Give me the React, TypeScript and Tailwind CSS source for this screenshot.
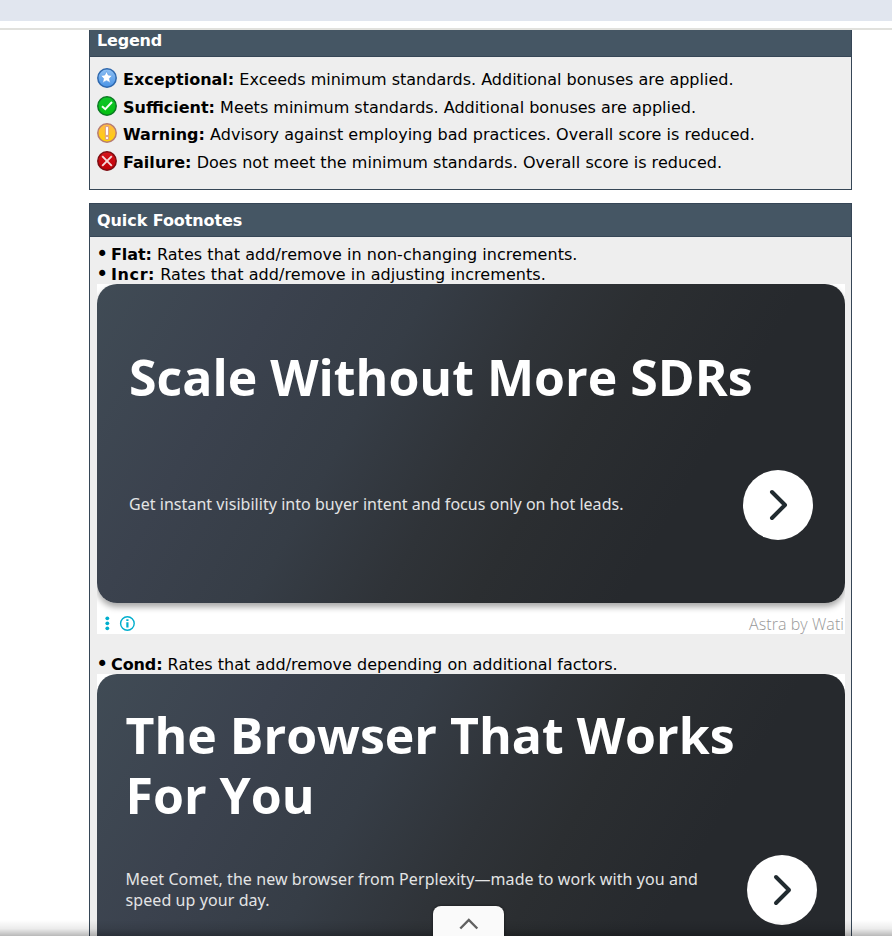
import React from "react";

const verdana = "font-['Verdana','DejaVu_Sans',sans-serif]";
const cardGradient = "bg-[linear-gradient(120deg,#404b55_0%,#3b424e_20%,#363d46_36%,#2f3338_50%,#2b2e31_60%,#26292d_76%,#26292d_100%)]";

function StatusIcon({ kind }: { kind: "star" | "check" | "warn" | "fail" }) {
  const colors = {
    star: ["#8fc0f3", "#4a94e6", "#2f68ad"],
    check: ["#0fc52a", "#04c010", "#0b7a22"],
    warn: ["#ffb84a", "#ffd400", "#b67c72"],
    fail: ["#d6141c", "#bd0006", "#7b0d12"],
  }[kind];
  return (
    <svg width="20" height="20" viewBox="0 0 20 20" className="mr-1.5 shrink-0">
      <defs>
        <linearGradient id={kind} x1="0" y1="0" x2="0" y2="1">
          <stop offset="0" stopColor={colors[0]} />
          <stop offset="1" stopColor={colors[1]} />
        </linearGradient>
      </defs>
      <circle cx="10" cy="10" r="9.2" fill={`url(#${kind})`} stroke={colors[2]} strokeWidth="1.5" />
      {kind === "star" && <path d="M9.5 3.4l1.8 3.7 4.1.5-3 2.8.9 4.3-3.8-2-3.8 2 .9-4.3-3-2.8 4.1-.5z" fill="#fff" stroke="#5b9be2" strokeWidth=".6" />}
      {kind === "check" && <path d="M5 10.2l3.3 3L15 6" fill="none" stroke="#f4fff4" strokeWidth="2" />}
      {kind === "warn" && <path d="M8.4 3.6h3.2v8.8H8.4zM8.4 13.6h3.2v2.8H8.4z" fill="#fff" stroke="#d08c84" strokeWidth=".8" />}
      {kind === "fail" && <path d="M5.2 5.2l9.6 9.6M14.8 5.2l-9.6 9.6" stroke="#f5dcdc" strokeWidth="1.9" />}
    </svg>
  );
}

function Arrow() {
  return (
    <div className="flex h-[70px] w-[70px] shrink-0 items-center justify-center rounded-full bg-white">
      <svg width="70" height="70" viewBox="0 0 70 70" fill="none">
        <path d="M29 22l13 13-13 13" stroke="#212b30" strokeWidth="4" strokeLinecap="round" strokeLinejoin="round" />
      </svg>
    </div>
  );
}

const legend = [
  { kind: "star", label: "Exceptional:", text: "Exceeds minimum standards. Additional bonuses are applied.", h: "h-7", ls: "" },
  { kind: "check", label: "Sufficient:", text: "Meets minimum standards. Additional bonuses are applied.", h: "h-[27px]", ls: "" },
  { kind: "warn", label: "Warning:", text: "Advisory against employing bad practices. Overall score is reduced.", h: "h-7", ls: "tracking-[0.01px]" },
  { kind: "fail", label: "Failure:", text: "Does not meet the minimum standards. Overall score is reduced.", h: "h-5", ls: "tracking-[0.03px]" },
] as const;

function Note({ label, text, tracking, labelTracking }: { label: string; text: string; tracking: string; labelTracking: string }) {
  return (
    <p className="flex h-5 whitespace-pre leading-[22px]">
      <span className="w-3.5 text-[21px] leading-[21px] -indent-px">•</span>
      <span className={tracking}><b className={labelTracking}>{label}</b> {text}</span>
    </p>
  );
}

export default function App() {
  return (
    <div className={`relative h-[937px] w-[892px] overflow-hidden bg-white text-[16px] text-black ${verdana}`}>
      <header className="h-[30px] border-b-2 border-[#e1e1dd] bg-white">
        <div className="h-[21px] bg-[#e1e6ef]" />
      </header>
      <main className="ml-[89px] w-[763px]">
        <section className="h-40 border border-t-0 border-[#364656] bg-[#eee]">
          <h2 className="h-[27px] border-b border-[#364656] bg-[#455664] pl-[7px] font-bold leading-[22px] tracking-[-0.2px] text-white">Legend</h2>
          <div className="pl-[7px] pt-[11px]">
            {legend.map((l) => (
              <div key={l.kind} className={`flex items-start whitespace-pre leading-6 ${l.h}`}>
                <StatusIcon kind={l.kind} />
                <span className={l.ls}><b>{l.label}</b> {l.text}</span>
              </div>
            ))}
          </div>
        </section>
        <section className="mt-[13px] h-[760px] border border-[#364656] bg-[#eee]">
          <h2 className="h-[33px] border-b border-[#364656] bg-[#455664] pl-[7px] font-bold leading-[34px] tracking-[-0.08px] text-white">Quick Footnotes</h2>
          <div className="pl-[7px] pr-[6px] pt-[7px]">
            <Note label="Flat:" text="Rates that add/remove in non-changing increments." tracking="tracking-[0.05px]" labelTracking="tracking-[-0.1px]" />
            <Note label="Incr:" text="Rates that add/remove in adjusting increments." tracking="tracking-[0.07px]" labelTracking="tracking-[0.6px]" />
            <div className="h-[350px] overflow-hidden bg-white font-['Noto_Sans',sans-serif]">
              <div className={`flex h-[319px] flex-col rounded-[20px] px-8 pt-[59px] text-white shadow-[0_4px_6px_rgba(0,0,0,.35)] ${cardGradient}`}>
                <h1 className="h-[127px] whitespace-nowrap font-['Open_Sans',sans-serif] text-[50px] font-bold leading-[68px]">Scale Without More SDRs</h1>
                <div className="flex items-center justify-between">
                  <p className="whitespace-nowrap pb-0.5 text-[16px] tracking-[0.04px] text-[#e3e4e5]">Get instant visibility into buyer intent and focus only on hot leads.</p>
                  <Arrow />
                </div>
              </div>
              <div className="flex h-[31px] items-end justify-between pl-2">
                <svg width="32" height="20" viewBox="0 0 32 20" className="mb-px" fill="#00aecd">
                  <circle cx="2.3" cy="5.3" r="1.9" /><circle cx="2.3" cy="10.3" r="1.9" /><circle cx="2.3" cy="15.3" r="1.9" />
                  <circle cx="22.4" cy="10.5" r="6.8" fill="none" stroke="#00aecd" strokeWidth="1.4" />
                  <path d="M21.3 9.2h2.2v5.2h-2.2zM21.3 6.2h2.2v1.8h-2.2z" />
                </svg>
                <span className="mr-px font-['Open_Sans',sans-serif] text-[16px] font-light leading-5 tracking-[0.07px] text-[#999]">Astra by Wati</span>
              </div>
            </div>
            <div className="mt-5">
              <Note label="Cond:" text="Rates that add/remove depending on additional factors." tracking="tracking-[0.02px]" labelTracking="tracking-[-0.1px]" />
            </div>
            <div className="bg-white font-['Noto_Sans',sans-serif]">
              <div className={`h-[319px] rounded-[20px] pl-[28.5px] pr-7 pt-[31px] text-white ${cardGradient}`}>
                <h1 className="h-[150px] w-[640px] font-['Open_Sans',sans-serif] text-[50px] font-bold leading-[60px]">The Browser That Works<br />For You</h1>
                <div className="flex items-center justify-between">
                  <p className="whitespace-nowrap text-[16px] leading-[21px] tracking-[0.085px] text-[#e3e4e5]">Meet Comet, the new browser from Perplexity—made to work with you and<br />speed up your day.</p>
                  <Arrow />
                </div>
              </div>
            </div>
          </div>
        </section>
      </main>
      <div className="absolute inset-x-0 bottom-px h-4 bg-[linear-gradient(to_bottom,transparent,rgba(0,0,0,.08)_55%,rgba(0,0,0,.28))]" />
      <div className="absolute bottom-px left-[433px] flex h-[30px] w-[71px] justify-center rounded-t-lg bg-[#fafafa] shadow-[0_0_3px_rgba(0,0,0,.6)]">
        <svg width="20" height="12" viewBox="0 0 20 12" className="mt-3" fill="none">
          <path d="M1.3 10.5L9.8 2l8.5 8.5" stroke="#616161" strokeWidth="2.4" />
        </svg>
      </div>
      <div className="absolute inset-x-0 bottom-0 h-px bg-white" />
    </div>
  );
}
